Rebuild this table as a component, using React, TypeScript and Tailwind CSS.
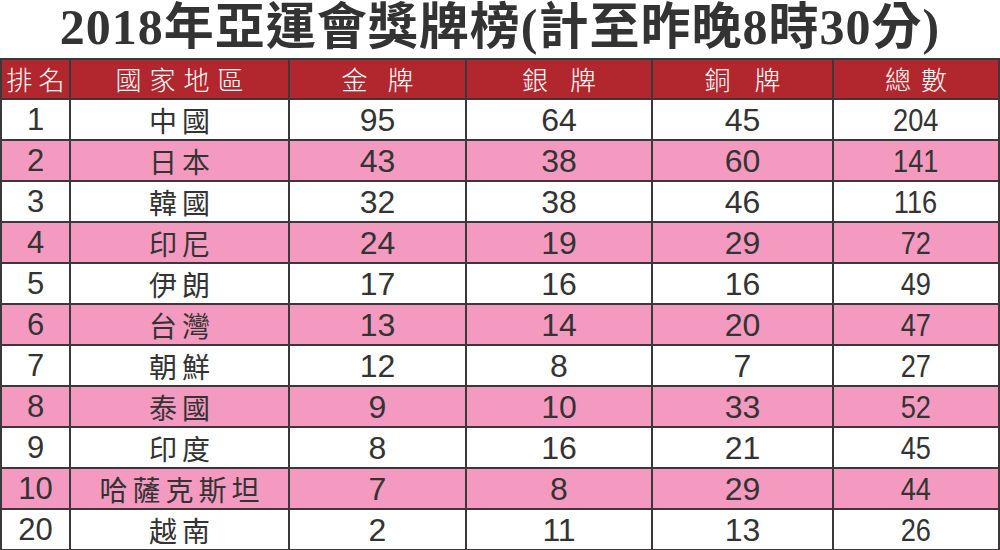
const rows = [
  { rank: "1", name: "中國", gold: "95", silver: "64", bronze: "45", total: "204" },
  { rank: "2", name: "日本", gold: "43", silver: "38", bronze: "60", total: "141" },
  { rank: "3", name: "韓國", gold: "32", silver: "38", bronze: "46", total: "116" },
  { rank: "4", name: "印尼", gold: "24", silver: "19", bronze: "29", total: "72" },
  { rank: "5", name: "伊朗", gold: "17", silver: "16", bronze: "16", total: "49" },
  { rank: "6", name: "台灣", gold: "13", silver: "14", bronze: "20", total: "47" },
  { rank: "7", name: "朝鮮", gold: "12", silver: "8", bronze: "7", total: "27" },
  { rank: "8", name: "泰國", gold: "9", silver: "10", bronze: "33", total: "52" },
  { rank: "9", name: "印度", gold: "8", silver: "16", bronze: "21", total: "45" },
  { rank: "10", name: "哈薩克斯坦", gold: "7", silver: "8", bronze: "29", total: "44" },
  { rank: "20", name: "越南", gold: "2", silver: "11", bronze: "13", total: "26" },
];

const cjk = "font-['Noto_Sans_CJK_TC','Noto_Sans_CJK_SC',sans-serif]";
const num = "font-['Liberation_Sans',Arial,sans-serif]";

export default function App() {
  return (
    <main className="w-[1000px] h-[550px] bg-white overflow-hidden text-[#333]">
      <h1
        className={`h-[58px] text-center text-[50px] leading-[54px] font-bold tracking-[1px] whitespace-nowrap font-['Liberation_Serif','Noto_Sans_CJK_TC',serif]`}
      >
        2018年亞運會獎牌榜(計至昨晚8時30分)
      </h1>

      <table className="w-[998px] table-fixed border-collapse">
        <colgroup>
          <col className="w-[69px]" />
          <col className="w-[219px]" />
          <col className="w-[177px]" />
          <col className="w-[186px]" />
          <col className="w-[181px]" />
          <col className="w-[166px]" />
        </colgroup>
        <thead>
          <tr className={`h-[40px] bg-[#b2272d] text-white text-[26px] leading-none whitespace-nowrap ${cjk}`}>
            <th className="border-2 border-[#3b3839] font-light p-0">
              <span className="tracking-[6px] -mr-[6px]">排名</span>
            </th>
            <th className="border-2 border-[#3b3839] font-light p-0">
              <span className="tracking-[8px] -mr-[8px]">國家地區</span>
            </th>
            <th className="border-2 border-[#3b3839] font-light p-0">
              <span className="tracking-[20px] -mr-[20px]">金牌</span>
            </th>
            <th className="border-2 border-[#3b3839] font-light p-0">
              <span className="tracking-[22px] -mr-[22px]">銀牌</span>
            </th>
            <th className="border-2 border-[#3b3839] font-light p-0">
              <span className="tracking-[24px] -mr-[24px]">銅牌</span>
            </th>
            <th className="border-2 border-[#3b3839] font-light p-0">
              <span className="tracking-[10px] -mr-[10px]">總數</span>
            </th>
          </tr>
        </thead>
        <tbody>
          {rows.map((r, i) => (
            <tr key={r.rank} className={`h-[41px] whitespace-nowrap ${i % 2 === 1 ? "bg-[#f49ac0]" : "bg-white"}`}>
              <td className={`border-2 border-[#3b3839] text-center text-[31px] leading-none p-0 ${num}`}>{r.rank}</td>
              <td className={`border-2 border-[#3b3839] text-center text-[28px] leading-none p-0 ${cjk}`}>
                <span className="tracking-[5px] -mr-[5px]">{r.name}</span>
              </td>
              <td className={`border-2 border-[#3b3839] text-center text-[32px] leading-none p-0 ${num}`}>{r.gold}</td>
              <td className={`border-2 border-[#3b3839] text-center text-[32px] leading-none p-0 ${num}`}>{r.silver}</td>
              <td className={`border-2 border-[#3b3839] text-center text-[32px] leading-none p-0 ${num}`}>{r.bronze}</td>
              <td className={`border-2 border-[#3b3839] text-center text-[32px] leading-none p-0 ${num}`}>
                <span className="inline-block scale-x-[0.85]">{r.total}</span>
              </td>
            </tr>
          ))}
        </tbody>
      </table>
    </main>
  );
}
